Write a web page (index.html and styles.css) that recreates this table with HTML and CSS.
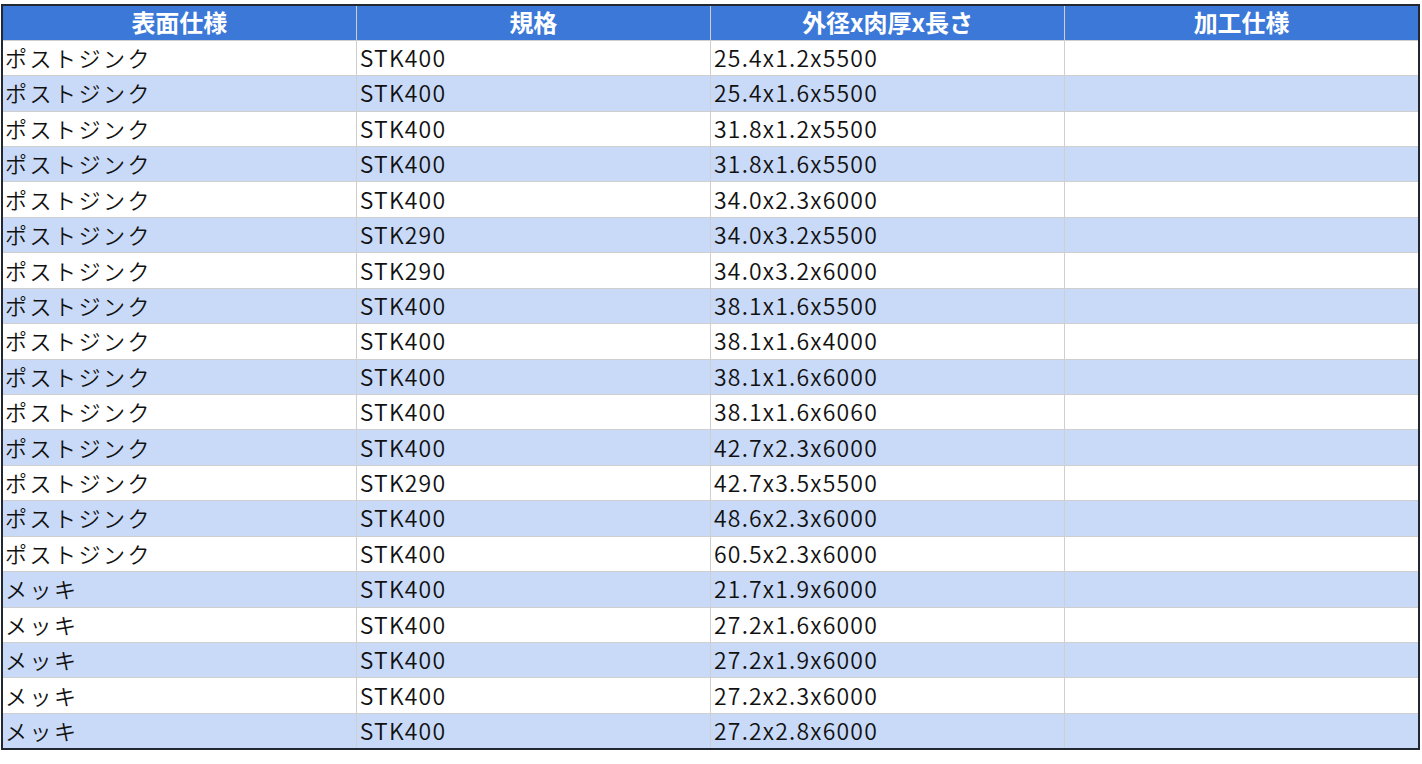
FILE: index.html
```html
<!DOCTYPE html>
<html lang="ja">
<head>
<meta charset="utf-8">
<link rel="stylesheet" href="styles.css">
</head>
<body>
<table class="sheet">
  <colgroup><col class="c"><col class="c"><col class="c"><col class="c"></colgroup>
  <thead>
    <tr><th>表面仕様</th><th>規格</th><th>外径x肉厚x長さ</th><th>加工仕様</th></tr>
  </thead>
  <tbody>
    <tr><td class="jp">ポストジンク</td><td>STK400</td><td>25.4x1.2x5500</td><td></td></tr>
    <tr><td class="jp">ポストジンク</td><td>STK400</td><td>25.4x1.6x5500</td><td></td></tr>
    <tr><td class="jp">ポストジンク</td><td>STK400</td><td>31.8x1.2x5500</td><td></td></tr>
    <tr><td class="jp">ポストジンク</td><td>STK400</td><td>31.8x1.6x5500</td><td></td></tr>
    <tr><td class="jp">ポストジンク</td><td>STK400</td><td>34.0x2.3x6000</td><td></td></tr>
    <tr><td class="jp">ポストジンク</td><td>STK290</td><td>34.0x3.2x5500</td><td></td></tr>
    <tr><td class="jp">ポストジンク</td><td>STK290</td><td>34.0x3.2x6000</td><td></td></tr>
    <tr><td class="jp">ポストジンク</td><td>STK400</td><td>38.1x1.6x5500</td><td></td></tr>
    <tr><td class="jp">ポストジンク</td><td>STK400</td><td>38.1x1.6x4000</td><td></td></tr>
    <tr><td class="jp">ポストジンク</td><td>STK400</td><td>38.1x1.6x6000</td><td></td></tr>
    <tr><td class="jp">ポストジンク</td><td>STK400</td><td>38.1x1.6x6060</td><td></td></tr>
    <tr><td class="jp">ポストジンク</td><td>STK400</td><td>42.7x2.3x6000</td><td></td></tr>
    <tr><td class="jp">ポストジンク</td><td>STK290</td><td>42.7x3.5x5500</td><td></td></tr>
    <tr><td class="jp">ポストジンク</td><td>STK400</td><td>48.6x2.3x6000</td><td></td></tr>
    <tr><td class="jp">ポストジンク</td><td>STK400</td><td>60.5x2.3x6000</td><td></td></tr>
    <tr><td class="jp">メッキ</td><td>STK400</td><td>21.7x1.9x6000</td><td></td></tr>
    <tr><td class="jp">メッキ</td><td>STK400</td><td>27.2x1.6x6000</td><td></td></tr>
    <tr><td class="jp">メッキ</td><td>STK400</td><td>27.2x1.9x6000</td><td></td></tr>
    <tr><td class="jp">メッキ</td><td>STK400</td><td>27.2x2.3x6000</td><td></td></tr>
    <tr><td class="jp">メッキ</td><td>STK400</td><td>27.2x2.8x6000</td><td></td></tr>
  </tbody>
</table>
</body>
</html>
```
FILE: styles.css
```css
html, body {
  margin: 0;
  padding: 0;
  background: #ffffff;
}
body {
  padding: 4px 0 0 1px;
  font-family: "Noto Sans CJK JP", "Noto Sans", sans-serif;
}
.sheet {
  width: 1419px;
  height: 746px;
  border-collapse: collapse;
  table-layout: fixed;
  border: 2px solid #222831;
}
.sheet tr {
  height: 35.3px;
}
.sheet th, .sheet td {
  box-sizing: border-box;
  padding: 0 0 0 3px;
  border: 1px solid #cfcfcf;
  white-space: nowrap;
  color: #111;
}
.sheet th {
  background: #3c78d8;
  color: #ffffff;
  font-weight: bold;
  font-size: 24px;
  line-height: 30px;
  text-align: center;
  vertical-align: middle;
  padding: 0 0 2px 0;
  border-top: 2px solid #222831;
}
.sheet td {
  text-align: left;
  vertical-align: middle;
  font-size: 23px;
  line-height: 28px;
  font-weight: 350;
  letter-spacing: 1.2px;
  padding-top: 0;
  padding-bottom: 2px;
  overflow: hidden;
}
.sheet td.jp {
  font-size: 22px;
  letter-spacing: 2.5px;
  padding-left: 2px;
}
.sheet tbody tr:nth-child(even) td {
  background: #c9daf8;
}
```
